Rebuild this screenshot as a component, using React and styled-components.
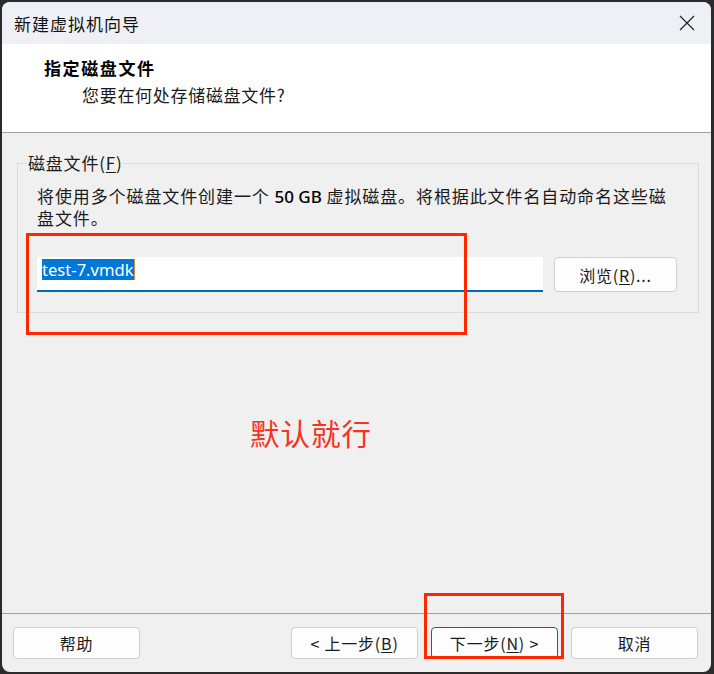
import React from "react";
import styled, { createGlobalStyle } from "styled-components";

const GlobalStyle = createGlobalStyle`
  html, body {
    margin: 0;
    padding: 0;
    background: #2b2b2b;
  }
  body {
    font-family: "Noto Sans CJK SC", "Noto Sans", sans-serif;
    color: #1a1a1a;
  }
`;

const Page = styled.div`
  width: 714px;
  height: 674px;
  padding: 2px 3px 2px 2px;
  box-sizing: border-box;
`;

const Window = styled.div`
  position: relative;
  height: 100%;
  display: flex;
  flex-direction: column;
  background: #f0f0f0;
  border-radius: 8px;
  overflow: hidden;
`;

const TitleBar = styled.div`
  height: 42px;
  flex: none;
  display: flex;
  align-items: center;
  justify-content: space-between;
  padding: 0 16px 0 12px;
  background: #eff0f5;
`;

const Title = styled.div`
  font-size: 17px;
  letter-spacing: 1px;
  color: #111;
`;

const CloseButton = styled.div`
  width: 16px;
  height: 16px;
  display: flex;
  color: #222;
`;

const Header = styled.div`
  height: 89px;
  flex: none;
  box-sizing: border-box;
  background: #fff;
  border-bottom: 1px solid #a0a0a0;
  padding: 12px 0 0 42px;
`;

const HeaderTitle = styled.div`
  font-size: 17px;
  font-weight: 700;
  letter-spacing: 1.6px;
  line-height: 24px;
  color: #000;
`;

const HeaderSub = styled.div`
  font-size: 17px;
  letter-spacing: 0.7px;
  line-height: 24px;
  margin: 3px 0 0 38px;
  color: #1a1a1a;
`;

const Body = styled.div`
  flex: 1;
  padding: 19px 12px 0 15px;
`;

const GroupBox = styled.fieldset`
  margin: 0;
  padding: 0 21px 20px 19px;
  border: 1px solid #dcdcdc;
  border-radius: 0;
  min-width: 0;
`;

const Legend = styled.legend`
  font-size: 17px;
  letter-spacing: 0.8px;
  padding: 0 1px;
  margin-left: -10px;
  line-height: 22px;
`;

const Underline = styled.span`
  text-decoration: underline;
  text-underline-offset: 2px;
`;

const Description = styled.p`
  margin: 0 0 28px;
  padding-top: 11px;
  font-size: 17px;
  letter-spacing: 0.9px;
  line-height: 22px;
  color: #1a1a1a;
`;

const Latin = styled.span`
  font-family: "Noto Sans", sans-serif;
  font-weight: 500;
  letter-spacing: 0;
  line-height: 1;
  color: #000;
`;

const FieldRow = styled.div`
  display: flex;
  align-items: stretch;
  gap: 11px;
`;

const TextField = styled.div`
  flex: 1;
  height: 35px;
  box-sizing: border-box;
  background: #fff;
  border-bottom: 2px solid #0067c0;
  padding: 2px 0 0 5px;
  display: flex;
  align-items: flex-start;
`;

const Selected = styled.span`
  font-family: "Noto Sans", sans-serif;
  font-size: 16.6px;
  line-height: 21px;
  background: #0078d7;
  color: #fff;
  border-right: 1px solid #e08a3c;
`;

const Button = styled.button`
  width: ${({ $width }) => $width || 127}px;
  height: 32px;
  box-sizing: border-box;
  background: #fdfdfd;
  border: 1px solid ${({ $primary }) => ($primary ? "#0067c0" : "#cfcfcf")};
  border-radius: 4px;
  font-family: "Noto Sans CJK SC", "Noto Sans", sans-serif;
  font-size: 16px;
  letter-spacing: 0.8px;
  color: #1a1a1a;
  padding: 0;
  display: flex;
  align-items: center;
  justify-content: center;
  gap: 0;
`;

const BrowseButton = styled(Button)`
  height: 35px;
`;

const Footer = styled.div`
  height: 59px;
  flex: none;
  box-sizing: border-box;
  border-top: 1px solid #a0a0a0;
  display: flex;
  align-items: flex-start;
  padding: 13px 13px 0 11px;
  gap: 13px;
`;

const Spacer = styled.div`
  flex: 1;
`;

const Annotation = styled.div`
  position: absolute;
  left: ${({ $x }) => $x}px;
  top: ${({ $y }) => $y}px;
  width: ${({ $w }) => $w}px;
  height: ${({ $h }) => $h}px;
  box-sizing: border-box;
  border: 3px solid #ff2600;
  pointer-events: none;
`;

const Note = styled.div`
  position: absolute;
  left: 248px;
  top: 409px;
  font-size: 29.5px;
  letter-spacing: 1px;
  color: #f5331f;
`;

export default function App() {
  return (
    <>
      <GlobalStyle />
      <Page>
        <Window>
          <TitleBar>
            <Title>新建虚拟机向导</Title>
            <CloseButton>
              <svg width="16" height="16" viewBox="0 0 16 16">
                <path d="M1 1L15 15M15 1L1 15" stroke="currentColor" strokeWidth="1.2" fill="none" />
              </svg>
            </CloseButton>
          </TitleBar>
          <Header>
            <HeaderTitle>指定磁盘文件</HeaderTitle>
            <HeaderSub>您要在何处存储磁盘文件?</HeaderSub>
          </Header>
          <Body>
            <GroupBox>
              <Legend>
                磁盘文件(<Underline>F</Underline>)
              </Legend>
              <Description>
                将使用多个磁盘文件创建一个 <Latin>50 GB</Latin> 虚拟磁盘。将根据此文件名自动命名这些磁盘文件。
              </Description>
              <FieldRow>
                <TextField>
                  <Selected>test-7.vmdk</Selected>
                </TextField>
                <BrowseButton $width={123}>
                  浏览(<Underline>R</Underline>)...
                </BrowseButton>
              </FieldRow>
            </GroupBox>
          </Body>
          <Footer>
            <Button>帮助</Button>
            <Spacer />
            <Button>
              &lt; 上一步(<Underline>B</Underline>)
            </Button>
            <Button $primary>
              下一步(<Underline>N</Underline>) &gt;
            </Button>
            <Button>取消</Button>
          </Footer>
          <Annotation $x={24} $y={231} $w={441} $h={102} />
          <Annotation $x={422} $y={591} $w={140} $h={66} />
          <Note>默认就行</Note>
        </Window>
      </Page>
    </>
  );
}
